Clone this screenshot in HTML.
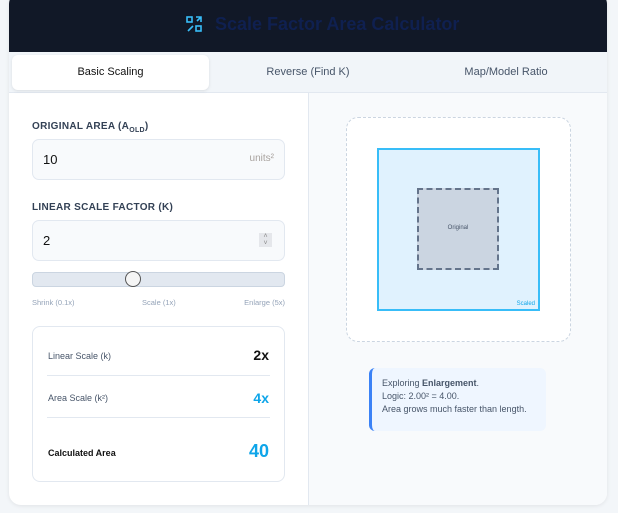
<!DOCTYPE html>
<html><head><style>
*{box-sizing:border-box;margin:0;padding:0}
body{width:618px;height:513px;background:#f3f6f9;font-family:"Liberation Sans",sans-serif;position:relative;overflow:hidden}
.card{position:absolute;left:9px;top:-8px;width:598px;height:513px;background:#fff;border-radius:12px;overflow:hidden;box-shadow:0 1px 4px rgba(0,0,0,.08)}
.in{position:absolute;left:0;top:8px;width:598px;height:505px}
.hdr{position:absolute;left:0;top:-8px;width:598px;height:60px;background:#111827}
.hdr .t{position:absolute;left:206px;top:22px;font-size:18px;font-weight:bold;color:#0f2050}
.tabs{position:absolute;top:52px;left:0;width:598px;height:41px;background:#f1f5f9;border-bottom:1px solid #e2e8f0}
.tab{position:absolute;top:3px;height:35px;line-height:35px;text-align:center;font-size:11px;color:#475569}
.tab.a{background:#fff;border-radius:6px;color:#111;box-shadow:0 1px 3px rgba(0,0,0,.1)}
.right{position:absolute;left:299px;top:93px;width:299px;height:412px;background:#f8fafc;border-left:1px solid #e2e8f0}
.lbl{position:absolute;left:23px;font-size:10px;font-weight:bold;color:#334155;letter-spacing:.3px}
.inp{position:absolute;left:23px;width:253px;height:41px;background:#f8fafc;border:1px solid #e2e8f0;border-radius:7px;font-size:13px;color:#111;padding:12px 10px}
.res{position:absolute;left:23px;top:326px;width:253px;height:156px;border:1px solid #e2e8f0;border-radius:8px;background:#fff}
.row{position:absolute;left:14px;right:14px;height:1px;background:#e2e8f0}
.rl{position:absolute;left:15px;font-size:9px;color:#475569}
.rv{position:absolute;right:15px;font-weight:bold}
</style></head><body>
<div class="card"><div class="in">
<div class="hdr">
<svg style="position:absolute;left:177px;top:24px" width="17" height="17" viewBox="0 0 17 17" fill="none" stroke="#38bdf8" stroke-width="1.6"><rect x="1" y="1" width="5" height="5"/><rect x="10" y="10" width="5" height="5"/><path d="M2 15 L7 10 M10 1 H15 V6 M15 1 L11 5"/></svg>
<div class="t">Scale Factor Area Calculator</div></div>
<div class="tabs">
<div class="tab a" style="left:3px;width:197px">Basic Scaling</div>
<div class="tab" style="left:200px;width:198px">Reverse (Find K)</div>
<div class="tab" style="left:398px;width:198px">Map/Model Ratio</div>
</div>
<div class="lbl" style="top:121px">ORIGINAL AREA (A<sub style="font-size:7px">OLD</sub>)</div>
<div class="inp" style="top:139px">10<span style="position:absolute;right:10px;top:13px;font-size:10px;color:#a8a29e">units²</span></div>
<div class="lbl" style="top:202px">LINEAR SCALE FACTOR (K)</div>
<div class="inp" style="top:220px">2<span style="position:absolute;right:12px;top:12px;width:13px;height:14px;background:#e5e7eb;font-size:7px;color:#888;text-align:center;line-height:7px">˄<br>˅</span></div>
<div style="position:absolute;left:23px;top:272px;width:253px;height:15px;background:#e2e8f0;border:1px solid #cbd5e1;border-radius:4px"></div>
<div style="position:absolute;left:116px;top:271px;width:16px;height:16px;border-radius:50%;background:#f5f5f5;border:1px solid #555"></div>
<div style="position:absolute;top:298px;left:23px;width:253px;font-size:7.5px;color:#94a3b8"><span>Shrink (0.1x)</span><span style="position:absolute;left:110px">Scale (1x)</span><span style="position:absolute;right:0">Enlarge (5x)</span></div>
<div class="res">
<div class="rl" style="top:24px">Linear Scale (k)</div><div class="rv" style="top:20px;font-size:14px;color:#111">2x</div>
<div class="row" style="top:48px"></div>
<div class="rl" style="top:66px">Area Scale (k²)</div><div class="rv" style="top:63px;font-size:14px;color:#0ea5e9">4x</div>
<div class="row" style="top:90px"></div>
<div class="rl" style="top:121px;color:#111;font-weight:bold">Calculated Area</div><div class="rv" style="top:114px;font-size:18px;color:#0ea5e9">40</div>
</div>
<div class="right">
<div style="position:absolute;left:37px;top:24px;width:225px;height:225px;border:1px dashed #cbd5e1;border-radius:12px;background:#fff"></div>
<div style="position:absolute;left:68px;top:55px;width:163px;height:163px;border:2px solid #38bdf8;background:#e0f2fe"><span style="position:absolute;right:3px;bottom:2px;font-size:6px;color:#0ea5e9">Scaled</span></div>
<div style="position:absolute;left:108px;top:95px;width:82px;height:82px;border:2px dashed #64748b;background:#cbd5e1;font-size:6px;color:#475569;text-align:center;line-height:76px">Original</div>
<div style="position:absolute;left:60px;top:275px;width:177px;height:63px;background:#eff6ff;border-left:3px solid #3b82f6;border-radius:6px;font-size:9px;color:#475569;padding:9px 10px;line-height:13px">Exploring <b>Enlargement</b>.<br>Logic: 2.00² = 4.00.<br>Area grows much faster than length.</div>
</div>
</div></div>
</body></html>
